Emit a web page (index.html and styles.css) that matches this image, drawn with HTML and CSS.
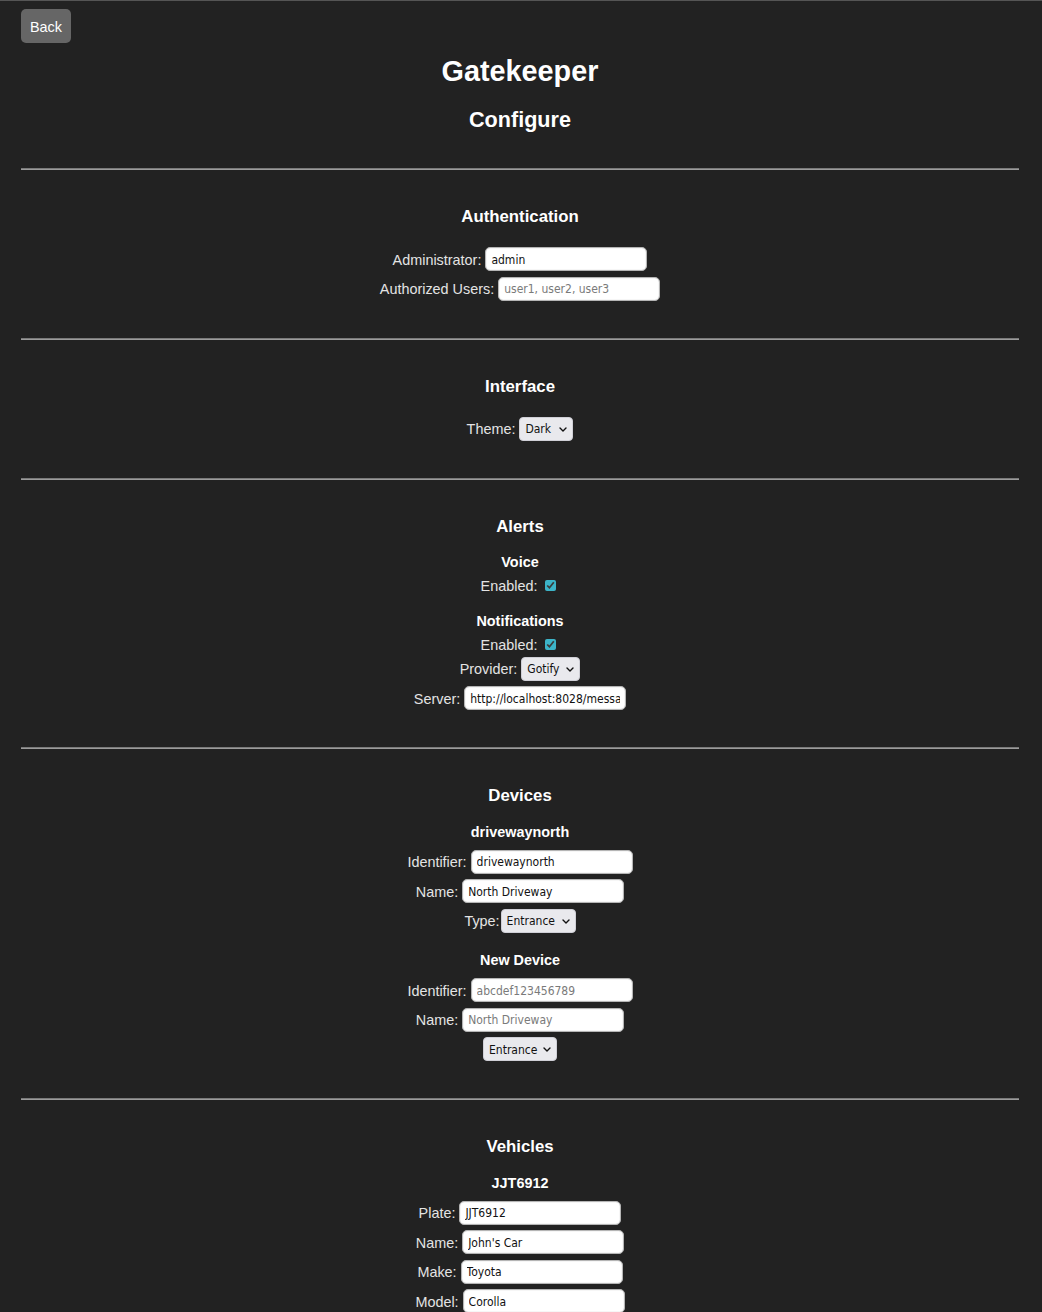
FILE: index.html
```html
<!DOCTYPE html>
<html lang="en">
<head>
<meta charset="utf-8">
<title>Gatekeeper - Configure</title>
<link rel="stylesheet" href="styles.css">
</head>
<body>
<div class="page">
  <button class="back">Back</button>
  <h1 class="title">Gatekeeper</h1>
  <h2 class="subtitle">Configure</h2>

  <hr class="rule">
  <section class="section">
    <h3 class="section-title">Authentication</h3>
    <div class="row"><label class="label">Administrator:</label><input class="field" type="text" value="admin"></div>
    <div class="row"><label class="label">Authorized Users:</label><input class="field" type="text" placeholder="user1, user2, user3"></div>
  </section>

  <hr class="rule">
  <section class="section">
    <h3 class="section-title">Interface</h3>
    <div class="row"><label class="label">Theme:</label><span class="select-wrap"><select class="select w-dark"><option>Dark</option><option>Light</option></select><svg class="chev" viewBox="0 0 8 5" width="8" height="5"><path d="M1 1 L4 4 L7 1" fill="none" stroke="#111" stroke-width="1.4" stroke-linecap="round" stroke-linejoin="round"/></svg></span></div>
  </section>

  <hr class="rule">
  <section class="section">
    <h3 class="section-title">Alerts</h3>
    <h4 class="group-title">Voice</h4>
    <div class="row check-row"><label class="label">Enabled:</label><input class="check" type="checkbox" checked></div>
    <h4 class="group-title">Notifications</h4>
    <div class="row check-row"><label class="label">Enabled:</label><input class="check" type="checkbox" checked></div>
    <div class="row"><label class="label">Provider:</label><span class="select-wrap"><select class="select w-gotify"><option>Gotify</option></select><svg class="chev" viewBox="0 0 8 5" width="8" height="5"><path d="M1 1 L4 4 L7 1" fill="none" stroke="#111" stroke-width="1.4" stroke-linecap="round" stroke-linejoin="round"/></svg></span></div>
    <div class="row"><label class="label">Server:</label><input class="field" type="text" value="http://localhost:8028/message"></div>
  </section>

  <hr class="rule">
  <section class="section">
    <h3 class="section-title">Devices</h3>
    <h4 class="group-title">drivewaynorth</h4>
    <div class="row"><label class="label">Identifier:</label><input class="field" type="text" value="drivewaynorth"></div>
    <div class="row"><label class="label">Name:</label><input class="field" type="text" value="North Driveway"></div>
    <div class="row tight"><label class="label">Type:</label><span class="select-wrap"><select class="select w-entrance"><option>Entrance</option><option>Exit</option></select><svg class="chev" viewBox="0 0 8 5" width="8" height="5"><path d="M1 1 L4 4 L7 1" fill="none" stroke="#111" stroke-width="1.4" stroke-linecap="round" stroke-linejoin="round"/></svg></span></div>
    <h4 class="group-title">New Device</h4>
    <div class="row"><label class="label">Identifier:</label><input class="field" type="text" placeholder="abcdef123456789"></div>
    <div class="row"><label class="label">Name:</label><input class="field" type="text" placeholder="North Driveway"></div>
    <div class="row"><span class="select-wrap"><select class="select w-entrance2"><option>Entrance</option><option>Exit</option></select><svg class="chev" viewBox="0 0 8 5" width="8" height="5"><path d="M1 1 L4 4 L7 1" fill="none" stroke="#111" stroke-width="1.4" stroke-linecap="round" stroke-linejoin="round"/></svg></span></div>
  </section>

  <hr class="rule">
  <section class="section">
    <h3 class="section-title">Vehicles</h3>
    <h4 class="group-title">JJT6912</h4>
    <div class="row"><label class="label">Plate:</label><input class="field" type="text" value="JJT6912"></div>
    <div class="row"><label class="label">Name:</label><input class="field" type="text" value="John's Car"></div>
    <div class="row"><label class="label">Make:</label><input class="field" type="text" value="Toyota"></div>
    <div class="row"><label class="label">Model:</label><input class="field" type="text" value="Corolla"></div>
  </section>
</div>
</body>
</html>
```

FILE: styles.css
```css
html, body {
  margin: 0;
  padding: 0;
  background: #222222;
}

body {
  border-top: 1px solid #555555;
  font-family: "Liberation Sans", Arial, sans-serif;
  font-size: 14.4px;
  color: #e4e4e4;
  overflow: hidden;
}

.page {
  padding: 0 23px 40px 21px;
}

.back {
  display: block;
  margin: 8px 0 0;
  width: 50px;
  height: 34px;
  padding: 2px 0 0;
  border: none;
  border-radius: 5px;
  background: #666666;
  color: #ffffff;
  font-family: "Liberation Sans", Arial, sans-serif;
  font-size: 14.4px;
  cursor: pointer;
}

.title {
  margin: 12px 0 0;
  font-size: 28.8px;
  line-height: 33px;
  text-align: center;
  color: #ffffff;
}

.subtitle {
  margin: 19px 0 0;
  font-size: 21.6px;
  line-height: 25px;
  text-align: center;
  color: #ffffff;
}

.subtitle + .rule {
  margin-top: 36px;
}

.rule {
  margin: 0;
  height: 0;
  border: none;
  border-top: 1px solid #7a7a7a;
  border-bottom: 1px solid #9c9c9c;
}

.section {
  padding: 36px 0 37px;
}

.section-title {
  margin: 0;
  padding-top: 1px;
  font-size: 16.8px;
  line-height: 20px;
  text-align: center;
  color: #ffffff;
}

.group-title {
  margin: 19.5px 0 0;
  font-size: 14.4px;
  line-height: 17px;
  text-align: center;
  color: #ffffff;
}

.section-title + .group-title {
  margin-top: 17.5px;
}

.row {
  display: flex;
  justify-content: center;
  align-items: center;
  gap: 4px;
  height: 24px;
  margin-top: 5.5px;
}

.section-title + .row {
  margin-top: 20px;
}

.group-title + .row {
  margin-top: 9px;
}

.group-title + .check-row {
  margin-top: 5.5px;
}

.check-row {
  height: 17px;
}

.check-row + .row {
  margin-top: 4px;
}

.row.tight {
  gap: 1px;
}

.label {
  white-space: nowrap;
  padding-top: 1px;
  color: #e4e4e4;
}

.field {
  box-sizing: border-box;
  width: 162px;
  height: 24px;
  margin: 0;
  padding: 1px 5px 0;
  border: 1px solid #b5b5b5;
  border-radius: 5px;
  background: #ffffff;
  color: #111111;
  font-family: "DejaVu Sans Condensed", "DejaVu Sans", sans-serif;
  font-stretch: condensed;
  font-size: 12px;
  box-shadow: inset 0 0 1px rgba(0, 0, 0, 0.35);
  outline: none;
}

.field::placeholder {
  color: #7a7a7a;
}

.check {
  width: 11px;
  height: 11px;
  margin: 0 3px 0 4px;
  accent-color: #3cb4c8;
}

.select-wrap {
  position: relative;
  display: inline-block;
  height: 24px;
}

.select {
  appearance: none;
  -webkit-appearance: none;
  box-sizing: border-box;
  height: 24px;
  margin: 0;
  padding: 1px 0 0 5px;
  border: 1px solid #cfcfd6;
  border-radius: 4px;
  background: #e9e9ed;
  color: #111111;
  font-family: "DejaVu Sans Condensed", "DejaVu Sans", sans-serif;
  font-stretch: condensed;
  font-size: 12px;
}

.w-dark { width: 54px; }
.w-gotify { width: 59px; }
.w-entrance { width: 75px; }
.w-entrance2 { width: 74px; }

.chev {
  position: absolute;
  right: 6px;
  top: 10px;
  pointer-events: none;
}
```
